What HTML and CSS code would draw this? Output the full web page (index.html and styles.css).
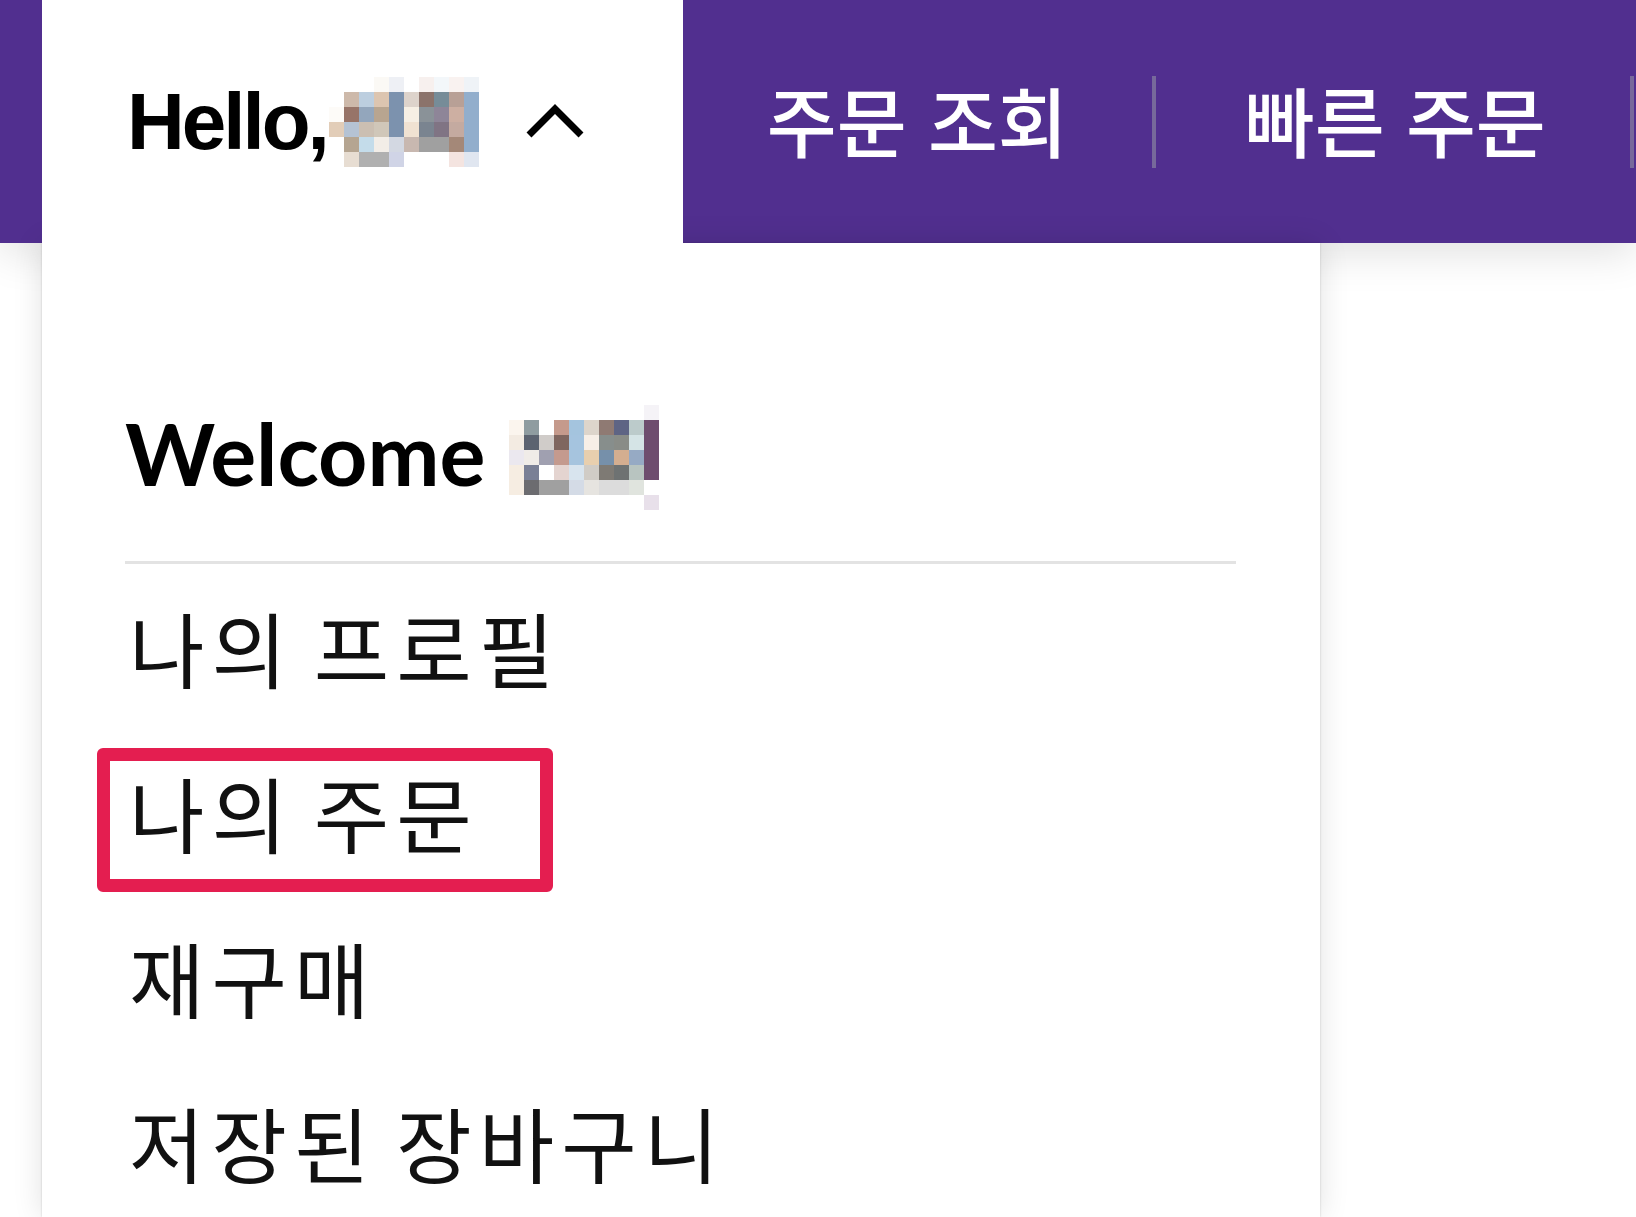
FILE: index.html
```html
<!DOCTYPE html>
<html lang="ko">

<head>
  <meta charset="UTF-8">
  <meta name="viewport" content="width=device-width, initial-scale=1.0">
  <title>My Account</title>
  <link rel="stylesheet" href="styles.css">
</head>

<body>
  <header class="topbar">
    <div class="account">
      <button class="account-toggle" type="button">
        <span class="hello">Hello,</span>
        <!-- blurred user name -->
        <svg class="name-blur" width="150" height="90" viewBox="0 0 150 90">
          <rect x="45" y="0" width="15" height="15" fill="#fbf9f5"/>
          <rect x="60" y="0" width="15" height="15" fill="#eef0f5"/>
          <rect x="90" y="0" width="15" height="15" fill="#f7f0ee"/>
          <rect x="105" y="0" width="15" height="15" fill="#f3f7fa"/>
          <rect x="120" y="0" width="15" height="15" fill="#f9f2f0"/>
          <rect x="135" y="0" width="15" height="15" fill="#eff3f7"/>

          <rect x="15" y="15" width="15" height="15" fill="#cdb9aa"/>
          <rect x="30" y="15" width="15" height="15" fill="#bccedf"/>
          <rect x="45" y="15" width="15" height="15" fill="#dcc5b0"/>
          <rect x="60" y="15" width="15" height="15" fill="#7c92ae"/>
          <rect x="75" y="15" width="15" height="15" fill="#ddd3cb"/>
          <rect x="90" y="15" width="15" height="15" fill="#8b736b"/>
          <rect x="105" y="15" width="15" height="15" fill="#768c98"/>
          <rect x="120" y="15" width="15" height="15" fill="#b8a096"/>
          <rect x="135" y="15" width="15" height="15" fill="#92aecc"/>

          <rect x="0" y="30" width="15" height="15" fill="#fdfbf8"/>
          <rect x="15" y="30" width="15" height="15" fill="#977468"/>
          <rect x="30" y="30" width="15" height="15" fill="#93a6bc"/>
          <rect x="45" y="30" width="15" height="15" fill="#b8a590"/>
          <rect x="60" y="30" width="15" height="15" fill="#7c92ae"/>
          <rect x="75" y="30" width="15" height="15" fill="#f6efe4"/>
          <rect x="90" y="30" width="15" height="15" fill="#8a9298"/>
          <rect x="105" y="30" width="15" height="15" fill="#8e8598"/>
          <rect x="120" y="30" width="15" height="15" fill="#cdafa2"/>
          <rect x="135" y="30" width="15" height="15" fill="#92aecc"/>

          <rect x="0" y="45" width="15" height="15" fill="#e2cdb8"/>
          <rect x="15" y="45" width="15" height="15" fill="#b5c3d4"/>
          <rect x="30" y="45" width="15" height="15" fill="#cbbfb2"/>
          <rect x="45" y="45" width="15" height="15" fill="#d0c7b9"/>
          <rect x="60" y="45" width="15" height="15" fill="#7c92ae"/>
          <rect x="75" y="45" width="15" height="15" fill="#f0e2d2"/>
          <rect x="90" y="45" width="15" height="15" fill="#7a8490"/>
          <rect x="105" y="45" width="15" height="15" fill="#807484"/>
          <rect x="120" y="45" width="15" height="15" fill="#c4aaa0"/>
          <rect x="135" y="45" width="15" height="15" fill="#92aecc"/>

          <rect x="15" y="60" width="15" height="15" fill="#b5a591"/>
          <rect x="30" y="60" width="15" height="15" fill="#c4dcea"/>
          <rect x="45" y="60" width="15" height="15" fill="#f2ede7"/>
          <rect x="60" y="60" width="15" height="15" fill="#d3d8e2"/>
          <rect x="75" y="60" width="15" height="15" fill="#c8b8b0"/>
          <rect x="90" y="60" width="30" height="15" fill="#a0a0a0"/>
          <rect x="120" y="60" width="15" height="15" fill="#a48878"/>
          <rect x="135" y="60" width="15" height="15" fill="#92aecc"/>

          <rect x="15" y="75" width="15" height="15" fill="#e7ddd2"/>
          <rect x="30" y="75" width="30" height="15" fill="#b0b0b0"/>
          <rect x="60" y="75" width="15" height="15" fill="#d0d4e6"/>
          <rect x="120" y="75" width="15" height="15" fill="#f4e4e0"/>
          <rect x="135" y="75" width="15" height="15" fill="#e0e6f0"/>
        </svg>
        <svg class="chevron" width="60" height="36" viewBox="0 0 60 36">
          <polyline points="4,31 30,5 56,31" fill="none" stroke="#000" stroke-width="7"/>
        </svg>
      </button>

      <div class="account-menu">
        <h2 class="welcome">
          <span>Welcome</span>
          <svg class="name-blur" width="150" height="105" viewBox="0 0 150 105">
            <rect x="135" y="0" width="15" height="15" fill="#f5f3f7"/>

            <rect x="0" y="15" width="15" height="15" fill="#fbf5ee"/>
            <rect x="15" y="15" width="15" height="15" fill="#8f9ca0"/>
            <rect x="45" y="15" width="15" height="15" fill="#c59a8c"/>
            <rect x="60" y="15" width="15" height="15" fill="#a4c4de"/>
            <rect x="75" y="15" width="15" height="15" fill="#ddd5cb"/>
            <rect x="90" y="15" width="15" height="15" fill="#8f7a73"/>
            <rect x="105" y="15" width="15" height="15" fill="#5e6484"/>
            <rect x="120" y="15" width="15" height="15" fill="#bccbcb"/>
            <rect x="135" y="15" width="15" height="15" fill="#6e4d6e"/>

            <rect x="0" y="30" width="15" height="15" fill="#f3ebe2"/>
            <rect x="15" y="30" width="15" height="15" fill="#5c6370"/>
            <rect x="30" y="30" width="15" height="15" fill="#d0ccc9"/>
            <rect x="45" y="30" width="15" height="15" fill="#7f665f"/>
            <rect x="60" y="30" width="15" height="15" fill="#a5c4df"/>
            <rect x="75" y="30" width="15" height="15" fill="#f7efe7"/>
            <rect x="90" y="30" width="15" height="15" fill="#878e8c"/>
            <rect x="105" y="30" width="15" height="15" fill="#898c87"/>
            <rect x="120" y="30" width="15" height="15" fill="#d5e4e6"/>
            <rect x="135" y="30" width="15" height="15" fill="#6e4d6e"/>

            <rect x="0" y="45" width="15" height="15" fill="#ebe8ef"/>
            <rect x="15" y="45" width="15" height="15" fill="#f0ece8"/>
            <rect x="30" y="45" width="15" height="15" fill="#a0a0b0"/>
            <rect x="45" y="45" width="15" height="15" fill="#c49a8e"/>
            <rect x="60" y="45" width="15" height="15" fill="#a6c4de"/>
            <rect x="75" y="45" width="15" height="15" fill="#e8cfae"/>
            <rect x="90" y="45" width="15" height="15" fill="#7690aa"/>
            <rect x="105" y="45" width="15" height="15" fill="#d4ae90"/>
            <rect x="120" y="45" width="15" height="15" fill="#96aac4"/>
            <rect x="135" y="45" width="15" height="15" fill="#6e4d6e"/>

            <rect x="0" y="60" width="15" height="15" fill="#f6ede2"/>
            <rect x="15" y="60" width="15" height="15" fill="#7a8096"/>
            <rect x="45" y="60" width="15" height="15" fill="#e4d4d0"/>
            <rect x="60" y="60" width="15" height="15" fill="#d8e4ee"/>
            <rect x="75" y="60" width="15" height="15" fill="#d0ccc6"/>
            <rect x="90" y="60" width="15" height="15" fill="#7e7a74"/>
            <rect x="105" y="60" width="15" height="15" fill="#6e7272"/>
            <rect x="120" y="60" width="15" height="15" fill="#b8c4c0"/>
            <rect x="135" y="60" width="15" height="15" fill="#6e4d6e"/>

            <rect x="0" y="75" width="15" height="15" fill="#f6ede2"/>
            <rect x="15" y="75" width="15" height="15" fill="#6c6c70"/>
            <rect x="30" y="75" width="30" height="15" fill="#a0a0a0"/>
            <rect x="60" y="75" width="15" height="15" fill="#d4dbe6"/>
            <rect x="75" y="75" width="15" height="15" fill="#e6e4e0"/>
            <rect x="90" y="75" width="30" height="15" fill="#dcdcdc"/>
            <rect x="120" y="75" width="15" height="15" fill="#e0e4de"/>

            <rect x="135" y="90" width="15" height="15" fill="#e8e0ea"/>
          </svg>
        </h2>

        <ul class="menu-list">
          <li><a href="#">나의 프로필</a></li>
          <li class="marked"><a href="#">나의 주문</a></li>
          <li><a href="#">재구매</a></li>
          <li><a href="#">저장된 장바구니</a></li>
        </ul>
      </div>
    </div>

    <nav class="quick-links">
      <a href="#">주문 조회</a>
      <span class="sep"></span>
      <a href="#">빠른 주문</a>
      <span class="sep"></span>
    </nav>
  </header>
</body>

</html>
```

FILE: styles.css
```css
body {
  margin: 0;
  min-height: 100vh;
  font-family: "Noto Sans CJK KR", sans-serif;
  background: #fff;
}

.topbar {
  position: relative;
  display: flex;
  height: 243px;
  padding-left: 42px;
  background: #512f8f;
  box-shadow: 0 10px 40px rgba(0, 0, 0, 0.12);
}

.account {
  position: relative;
  flex-shrink: 0;
}

.account-toggle {
  position: relative;
  z-index: 2;
  display: flex;
  align-items: center;
  height: 100%;
  padding: 0 98px 0 85px;
  border: none;
  background: #fff;
  color: #000;
  font: inherit;
  cursor: pointer;
}

.hello {
  font-family: "Liberation Sans", Arial, sans-serif;
  font-weight: 700;
  font-size: 80px;
  letter-spacing: -3px;
}

.account-toggle .name-blur {
  margin-left: 2px;
}

.chevron {
  margin-left: 46px;
}

.account-menu {
  position: absolute;
  top: 100%;
  left: 0;
  z-index: 1;
  width: 1278px;
  height: calc(100vh - 243px);
  overflow: hidden;
  box-sizing: border-box;
  padding: 157px 84px 0 83px;
  background: #fff;
  box-shadow: 0 0 2px rgba(0, 0, 0, 0.18), 0 0 28px rgba(0, 0, 0, 0.12);
}

.welcome {
  display: flex;
  align-items: flex-start;
  margin: 0;
  padding-bottom: 51px;
  border-bottom: 3px solid #e3e3e3;
  color: #000;
  font-family: Lato, sans-serif;
  font-weight: 700;
  font-size: 86px;
  line-height: 105px;
}

.welcome .name-blur {
  margin: 5px 0 0 24px;
}

.menu-list {
  list-style: none;
  margin: 0;
  padding: 0;
}

.menu-list a {
  display: block;
  padding-left: 4px;
  color: #111;
  font-size: 82px;
  line-height: 165px;
  letter-spacing: 7px;
  word-spacing: -10px;
  text-decoration: none;
}

.menu-list .marked {
  position: relative;
}

/* red annotation box */
.menu-list .marked::after {
  content: "";
  position: absolute;
  left: -28px;
  top: 19px;
  width: 456px;
  height: 144px;
  box-sizing: border-box;
  border: 13px solid #e41e50;
  border-radius: 6px;
}

.quick-links {
  display: flex;
  align-items: center;
  min-width: 0;
  overflow: hidden;
}

.quick-links a {
  flex-shrink: 0;
  padding: 0 84px 6px;
  color: #fff;
  font-size: 76px;
  font-weight: 500;
  white-space: nowrap;
  text-decoration: none;
}

.sep {
  flex-shrink: 0;
  width: 4px;
  height: 92px;
  margin-right: 5px;
  background: #77699b;
}
```
